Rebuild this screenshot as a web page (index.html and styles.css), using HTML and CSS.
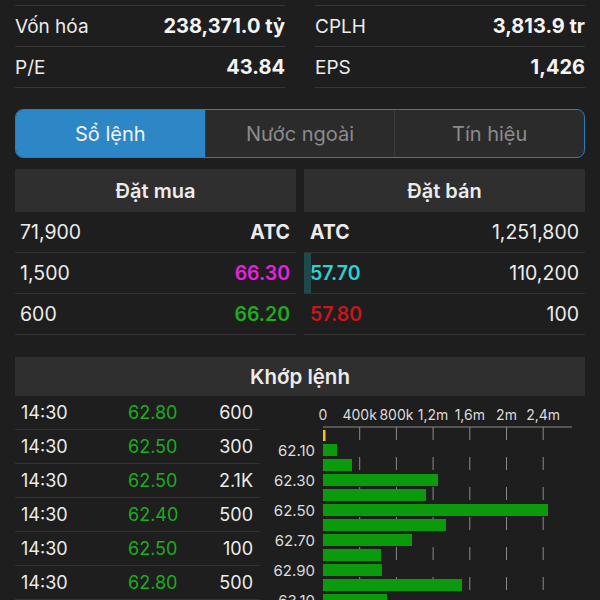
FILE: index.html
```html
<!DOCTYPE html>
<html lang="vi">
<head>
    <meta charset="UTF-8">
    <meta name="viewport" content="width=device-width, initial-scale=1.0">
    <title>Sổ lệnh</title>
    <link rel="stylesheet" href="styles.css">
</head>
<body>
    <div class="page">
        <!-- Chỉ số cơ bản -->
        <div class="stats">
            <div class="stat"><span>Vốn hóa</span><strong>238,371.0 tỷ</strong></div>
            <div class="stat"><span>CPLH</span><strong>3,813.9 tr</strong></div>
            <div class="stat"><span>P/E</span><strong>43.84</strong></div>
            <div class="stat"><span>EPS</span><strong>1,426</strong></div>
        </div>

        <div class="tabs">
            <div class="tab active">Sổ lệnh</div>
            <div class="tab">Nước ngoài</div>
            <div class="tab">Tín hiệu</div>
        </div>

        <!-- Sổ lệnh -->
        <div class="book">
            <div class="side">
                <div class="side-head">Đặt mua</div>
                <div class="book-row"><span>71,900</span><strong>ATC</strong></div>
                <div class="book-row"><span>1,500</span><span class="price magenta">66.30</span></div>
                <div class="book-row"><span>600</span><span class="price green">66.20</span></div>
            </div>
            <div class="side">
                <div class="side-head">Đặt bán</div>
                <div class="book-row"><strong>ATC</strong><span>1,251,800</span></div>
                <div class="book-row depth"><span class="price cyan">57.70</span><span>110,200</span></div>
                <div class="book-row"><span class="price red">57.80</span><span>100</span></div>
            </div>
        </div>

        <!-- Khớp lệnh -->
        <div class="match">
            <div class="match-head">Khớp lệnh</div>
            <div class="match-body">
                <div class="trades" id="trades"></div>
                <svg class="chart" width="315" height="204" viewBox="0 0 315 204" id="chart"></svg>
            </div>
        </div>
    </div>

    <script>
        const trades = [
            ['14:30', '62.80', '600'],
            ['14:30', '62.50', '300'],
            ['14:30', '62.50', '2.1K'],
            ['14:30', '62.40', '500'],
            ['14:30', '62.50', '100'],
            ['14:30', '62.80', '500']
        ];

        const tradeList = document.getElementById('trades');
        trades.forEach(t => {
            const row = document.createElement('div');
            row.className = 'trade';
            row.innerHTML = `<span>${t[0]}</span><span class="green">${t[1]}</span><span class="vol">${t[2]}</span>`;
            tradeList.appendChild(row);
        });

        // Khối lượng theo giá
        const chart = document.getElementById('chart');
        const x0 = 53;
        const step = 36.7; // px cho 400k
        const ticks = ['0', '400k', '800k', '1,2m', '1,6m', '2m', '2,4m'];
        const bars = [14, 29, 115, 103, 225, 123, 89, 58, 59, 139, 64];
        const prices = ['62.10', '62.30', '62.50', '62.70', '62.90', '63.10'];

        let svg = '';
        ticks.forEach((label, i) => {
            const x = x0 + i * step;
            svg += `<text class="axis-label" x="${x}" y="24" text-anchor="middle">${label}</text>`;
            if (i > 0) {
                svg += `<line class="grid" x1="${x}" y1="31" x2="${x}" y2="204"/>`;
            }
        });
        svg += `<line class="axis" x1="${x0}" y1="31" x2="302" y2="31"/>`;
        svg += `<rect x="${x0}" y="34" width="2.5" height="11" fill="#f2c418"/>`;
        bars.forEach((w, i) => {
            svg += `<rect x="${x0}" y="${48 + i * 15}" width="${w}" height="12" fill="#0b9a0b"/>`;
        });
        prices.forEach((p, i) => {
            svg += `<text class="price-label" x="45" y="${60 + i * 30}" text-anchor="end">${p}</text>`;
        });
        chart.innerHTML = svg;
    </script>
</body>
</html>
```

FILE: styles.css
```css
body {
    font-family: Inter, "Liberation Sans", sans-serif;
    margin: 0;
    padding: 0;
    background-color: #1e1e1e;
    color: #ececec;
    overflow: hidden;
}
.page {
    padding: 5px 15px 0;
}
.stats {
    display: grid;
    grid-template-columns: 1fr 1fr;
    column-gap: 30px;
}
.stat {
    display: flex;
    justify-content: space-between;
    align-items: center;
    height: 41px;
    box-sizing: border-box;
    border-top: 1px solid #363636;
    font-size: 19px;
}
.stat:nth-child(n+3) {
    border-bottom: 1px solid #363636;
    height: 42px;
}
.stat strong {
    font-size: 20px;
    font-weight: 700;
    color: #f4f4f4;
}
.tabs {
    display: flex;
    margin-top: 21px;
    height: 49px;
    box-sizing: border-box;
    border: 1.5px solid #2b7cba;
    border-radius: 8px;
    overflow: hidden;
    background: #2b2b2b;
}
.tab {
    flex: 1;
    display: flex;
    align-items: center;
    justify-content: center;
    font-size: 20px;
    color: #8c8c8c;
    border-left: 1px solid #3a3a3a;
}
.tab:first-child {
    border-left: none;
}
.tab.active {
    background: #2d86c6;
    color: #f4f4f4;
}
.book {
    display: grid;
    grid-template-columns: 1fr 1fr;
    column-gap: 8px;
    margin-top: 11px;
}
.side-head {
    height: 43px;
    display: flex;
    align-items: center;
    justify-content: center;
    background: #2f2f2f;
    font-size: 20px;
    font-weight: 600;
}
.book-row {
    display: flex;
    justify-content: space-between;
    align-items: center;
    height: 41px;
    box-sizing: border-box;
    padding: 0 6px 0 5px;
    border-bottom: 1px solid #333;
    font-size: 19.5px;
}
.side:last-child .book-row {
    padding: 0 6px 0 6px;
}
.book-row strong {
    font-weight: 700;
}
.book-row.depth {
    background: linear-gradient(to right, #1f4a4c 7px, transparent 7px);
}
.price {
    font-weight: 600;
}
.magenta { color: #e423e0; }
.green { color: #1fab1f; }
.cyan { color: #2ad2d4; }
.red { color: #c9151c; }

.match {
    margin-top: 22px;
}
.match-head {
    height: 39px;
    display: flex;
    align-items: center;
    justify-content: center;
    background: #2f2f2f;
    font-size: 20.5px;
    font-weight: 600;
}
.match-body {
    display: flex;
    gap: 10px;
}
.trades {
    width: 245px;
}
.trade {
    display: grid;
    grid-template-columns: 107px 1fr auto;
    align-items: center;
    height: 34px;
    box-sizing: border-box;
    padding: 0 7px 0 6px;
    border-bottom: 1px solid #333;
    font-size: 18px;
}
.trade .vol {
    text-align: right;
}
.chart {
    display: block;
    flex-shrink: 0;
}
.axis-label {
    font-size: 14px;
    fill: #dcdcdc;
}
.price-label {
    font-size: 15px;
    fill: #dcdcdc;
}
.axis {
    stroke: #8a8a8a;
    stroke-width: 1;
}
.grid {
    stroke: #8a8a8a;
    stroke-width: 1;
    stroke-dasharray: 13 17;
}
```
